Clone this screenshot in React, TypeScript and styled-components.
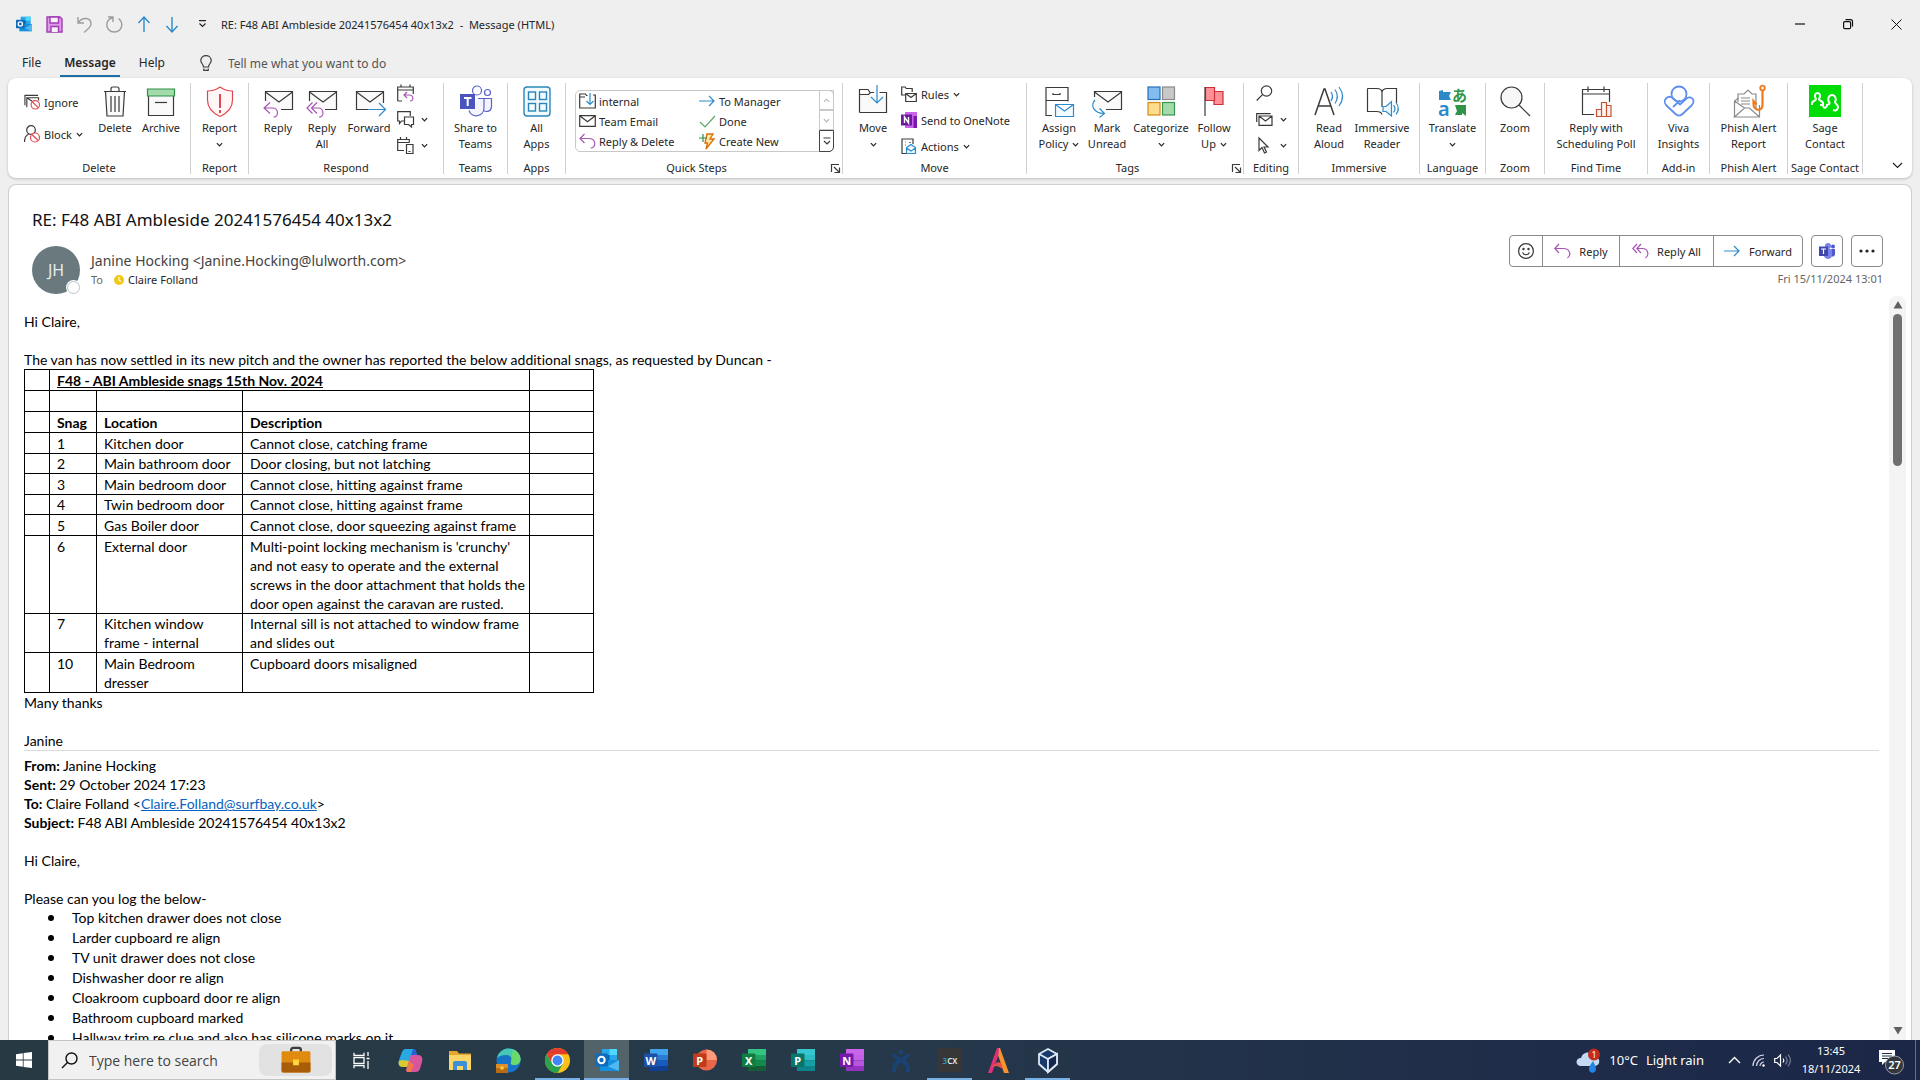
import React from "react";
import styled, { createGlobalStyle, css } from "styled-components";

const ui = '"Noto Sans", "Open Sans", sans-serif';
const bodyFont = 'Lato, "Open Sans", sans-serif';
const ink = "#262626";
const purple = "#a855b5";
const blue = "#2e8bcb";

const GlobalStyle = createGlobalStyle`
  *, *::before, *::after { box-sizing: border-box; }
  body { margin: 0; background: #efefef; font-family: ${ui}; color: ${ink}; overflow: hidden; }
  button, input { font: inherit; color: inherit; }
  button { background: none; border: 0; padding: 0; margin: 0; cursor: default; }
  svg { display: block; flex: none; overflow: visible; }
`;

/* ---------- icon helpers ---------- */

type IconProps = { w?: number; h?: number; box?: string; color?: string; sw?: number; children: React.ReactNode };
const Icon = ({ w = 32, h = w, box, color = "#3b3a39", sw = 1.2, children }: IconProps) => (
  <svg width={w} height={h} viewBox={box ?? `0 0 ${w} ${h}`} fill="none" stroke={color} strokeWidth={sw} aria-hidden="true">
    {children}
  </svg>
);

const Chevron = ({ w = 7, color = "#262626" }: { w?: number; color?: string }) => (
  <Icon w={w} h={w} box="0 0 8 8" color={color} sw={1.4}><path d="M1 2.5l3 3 3-3" /></Icon>
);

const Envelope = ({ open = "M3.5 16V6.5h27v18H19" }: { open?: string }) => (
  <><path d="M3.5 6.5h27v18h-27z" fill="#fafafa" stroke="none" /><path d={open} /><path d="M3.5 7L17 17 30.5 7" /></>
);

const icons = {
  ignore: <Icon w={16} box="0 0 17 17"><path d="M1 12V1.5h14M3 14V4h12.500v3M3 4l6 4" /><circle cx="12" cy="11.5" r="4.5" fill="#fff" stroke="#e0484f" /><path d="M9 8.5l6 6" stroke="#e0484f" /></Icon>,
  block: <Icon w={16} h={18}><circle cx="7" cy="5" r="4.3" /><path d="M5 9c-3 1-4.500 4-4.500 8" /><circle cx="11" cy="12.5" r="4.5" fill="#fff" stroke="#e0484f" /><path d="M8 9.5l6 6" stroke="#e0484f" /></Icon>,
  trash: <Icon><path d="M6.5 6.5l1.500 24.500h16L25.500 6.500" fill="#fafafa" /><path d="M5 6.5h22M12 6V4q0-2 2-2h4q2 0 2 2v2M12 11v16M16 11v16M20 11v16" /></Icon>,
  archive: <Icon><path d="M3.5 11v19.500h25V11" fill="#fafafa" /><path d="M2.5 4h27v7h-27z" fill="#a3dbab" stroke="#2f8f46" /><path d="M10 17.5h12" /></Icon>,
  report: <Icon color="#e0484f"><path d="M16 2c4 3 8 4 12.500 4v9c0 8-5 13-12.500 16.500C8.500 28 3.500 23 3.500 15V6C8 6 12 5 16 2z" fill="#fff7f7" /><path d="M16 9v14M16 25v3" strokeWidth="2" /></Icon>,
  reply: <Icon><Envelope /><path d="M8 17.500l-6 5.500 6 5.500M2 23h8c4 0 5.500 2.500 5.500 5 0 2.500-2 4-4 4" stroke={purple} /></Icon>,
  replyAll: <Icon><Envelope /><path d="M6.500 17.500L1 23l5.500 5.500M11 17.500L5.500 23l5.500 5.500M5.500 23h6c4 0 5.500 2.500 5.500 5 0 2.500-2 4-4 4" stroke={purple} /></Icon>,
  forward: <Icon><Envelope open="M15 24.5H3.500v-18h27V18" /><path d="M15 24.5h17M26 18l6.500 6.500L26 31" stroke={blue} /></Icon>,
  meeting: <Icon w={17} h={18}><path d="M.7 17V3h15.600v7M.7 6h15.600M4 3V.5M13 3V.5M.7 17H5" /><path d="M10 8l-3 3 3 3M7 11h5c5 0 5 6 1 6" stroke={purple} /></Icon>,
  im: <Icon w={17} h={17}><path d="M7 10H4.500L2.500 12.500V10H.7V.7h12.600V5" /><path d="M7.500 6h9v7.500h-2V16l-3-2.500h-4z" /></Icon>,
  moreRespond: <Icon w={17} h={17}><path d="M7 13.500H.7V2.500h11.600v3M.7 5.500h11.600M3.500 2.500V0M9.500 2.500V0" /><path d="M9.500 7.500h6.500v9H9.500zM11.500 14.500h2" /></Icon>,
  teams: <Icon color="#5b62c9"><circle cx="17" cy="5.5" r="4.5" /><circle cx="27.5" cy="7.5" r="3" /><path d="M22 13.500h9.500v8c0 5-5 6-8 4M18 13.500h6v9c0 10-13 11-15 3" fill="#f4f4ff" /><path d="M0 9h15v15H0z" fill="#4b53bc" stroke="none" /><path d="M4 13h7.500M7.700 13v8" stroke="#fff" strokeWidth="2" /></Icon>,
  apps: <Icon color="#2a86b8" sw={1.4}><rect x="3" y="2" width="26" height="29" rx="3" fill="#f1fafe" /><rect x="7.5" y="7" width="7" height="7.5" /><rect x="18.5" y="7" width="7" height="7.5" /><rect x="7.5" y="18.5" width="7" height="7.5" /><rect x="18.5" y="18.5" width="7" height="7.5" /></Icon>,
  qsMove: <Icon w={17} h={16}><path d="M6 4H.7v11h15.600V2H14M.7 4V1h5.800l1 1.500h1" /><path d="M11 0v11M7.500 8l3.500 3.500L14.500 8" stroke={blue} /></Icon>,
  qsMail: <Icon w={17} h={12}><path d="M.7.7h15.600v10.600H.7zM.7.7l7.800 6 7.800-6" /></Icon>,
  qsReply: <Icon w={17} h={15} color={purple}><path d="M5.500 0L1 4.500 5.500 9M1 4.500h8.500c8 0 8 9.500 2 9.500" /></Icon>,
  qsForward: <Icon w={16} h={12} color={blue}><path d="M0 6h15M10 1l5 5-5 5" /></Icon>,
  qsDone: <Icon w={17} h={13} color="#5aa768"><path d="M1 7l5 5L16 1" /></Icon>,
  qsNew: <Icon w={16} h={17} color="#d9730d"><path d="M8 1h6l-3 5h4L7 16l1.500-6H6z" fill="#ffe9a8" strokeWidth="1.4" /><path d="M4 1v8M0 5h8" stroke="#2f8f46" /></Icon>,
  move: <Icon><path d="M2.500 27.500V10h27v17.500z" fill="#fafafa" stroke="none" /><path d="M2.500 27.500V4.500h8.500l2 3h4M22.500 7.500h7v20h-27M2.500 9.500h9l2-2" /><path d="M20 0v18M14 12l6 6 6-6" stroke={blue} /></Icon>,
  rules: <Icon w={16} h={17}><path d="M4 9H.7V1h3.500l1 1.500h6V6" /><path d="M4.700 7.500h10.600v8H4.700zM4.700 7.500l5.300 4 5.300-4" /></Icon>,
  onenote: <Icon w={16} h={16}><path d="M4 0h12v16H4z" fill="#ca64ea" stroke="none" /><path d="M12.500 4H16v12h-3.500z" fill="#7719aa" stroke="none" /><path d="M0 2.500h11v11H0z" fill="#6b1c9c" stroke="none" /><path d="M3.500 11V5l4 6V5" stroke="#fff" strokeWidth="1.4" /></Icon>,
  actions: <Icon w={16} h={17}><path d="M5 15.500H1V1h11v5" /><path d="M4 4h1M4 7h1M8 4.500h2" stroke="#777" /><path d="M5.500 15.500V9.500L10 6.500l4.500 3v6zM5.500 10l4.500 3 4.500-3" stroke={blue} fill="#eaf5fd" /></Icon>,
  assign: <Icon><path d="M9 30.500H3V2.500h22v14M3 15.500h22M10 8v1.500h7V8" /><path d="M12.500 19.500h18v12h-18zM12.500 19.500l9 6.500 9-6.500" stroke={blue} fill="#f3faff" /></Icon>,
  unread: <Icon><Envelope open="M3.500 12V6.500h27v18H15" /><path d="M4 15c-5 6-1 13 9 13.500M8.500 23.500l5 5-5 4" stroke={blue} /></Icon>,
  categorize: <Icon><rect x="3" y="2" width="12" height="12.5" fill="#83bdf0" stroke="#2271b8" /><rect x="17.5" y="2" width="12" height="12.5" fill="#c8c8c8" stroke="#8a8a8a" /><rect x="3" y="17.5" width="12" height="12.5" fill="#fcdc8d" stroke="#d58a17" /><rect x="17.5" y="17.5" width="12" height="12.5" fill="#a3dbab" stroke="#3a9550" /></Icon>,
  flag: <Icon><path d="M16 6.500h9v13h-9z" fill="#ff9298" stroke="#cc2f37" /><path d="M7.500 2.500h9v13h-9z" fill="#ff9298" stroke="#cc2f37" /><path d="M7 2v29" /></Icon>,
  find: <Icon w={17} h={17}><circle cx="10.5" cy="6" r="5.2" /><path d="M6.500 9.700L.7 15.500" /></Icon>,
  related: <Icon w={17} h={13}><path d="M.7 9V.7h14" /><path d="M3 3h13v9.300H3zM3 3l6.500 5L16 3" /></Icon>,
  select: <Icon w={17} h={17}><path d="M3 1v12.500l3-3 2.500 5.500 2-1-2.500-5H12z" /></Icon>,
  readAloud: <Icon><path d="M2 30L11 4h1l9 26M5.500 21h12" strokeWidth="1.5" /><path d="M18 7c2 3 2 6 0 9M22 4.500c3 4.500 3 9.500 0 14M26 2c4.500 6 4.500 13 0 19" stroke={blue} /></Icon>,
  reader: <Icon><path d="M1.500 3.500h9c3 0 5.500 1 5.500 4 0-3 2.500-4 5.500-4h9V18M1.500 3.500v23h9c3 0 5 .5 5.500 3M16 7.500V22" /><path d="M17 21.500h3l5.500-5v14.500L20 26.500h-3z" fill="#e9f5fd" stroke={blue} /><path d="M27.500 20c2 2.500 2 5 0 7.500M30 17.500c3 4 3 8 0 12" stroke={blue} /></Icon>,
  zoom: <Icon><circle cx="12.5" cy="12.5" r="10.5" fill="#f7f7f7" /><path d="M20 20l11 11" /></Icon>,
  poll: <Icon><path d="M14 29.500H2.500v-25h27V17M2.500 9h27M8 7V1.500M24 7V1.500" /><path d="M16.500 24.500h5V31.500h-5zM21.500 17.500h5V31.500h-5zM26.500 20.500h4.500v11h-4.500z" stroke="#c8502e" fill="#fdf3f0" /></Icon>,
  viva: <Icon color="#5f8fee" sw={1.8}><circle cx="16" cy="9" r="7.5" /><path d="M3 13.500c3-3 6-1.500 8 .5l6 5.500 6.500-6c3-2.500 6.500-.5 7 2 .4 2-.5 3.500-2 5L19.500 29c-2 2-5 2-7 0L3.500 20.500c-2-2-2.500-5-.5-7zM10 22l7-6.500" /></Icon>,
  phish: <Icon color="#8a8a8a"><path d="M5 17V9h6l4-4 4 4h4v14" fill="#fff" /><path d="M1.500 32V16l4-3M26.500 20v12h-25l10-9h5l10 9M1.500 16l10 7M8 13h9M8 16h9M8 19h9" /><path d="M29.500 6v14c0 7-9 6-9-1v-3l3 3.500" stroke="#ee7a1b" strokeWidth="2.2" /><circle cx="29.5" cy="3" r="2.3" stroke="#ee7a1b" strokeWidth="1.8" /></Icon>,
  sage: <Icon><path d="M0 0h32v32H0z" fill="#00dc06" stroke="none" /><path d="M3 20v-2c0-2 4-2 4-4-2-3-1-6 1.500-6s3.500 3 1.500 6c0 2 4 2 4 4v2H11M14 21c1 3 4 2 4-1 3-1 3-2 2-3-2-3 0-7 3-7s5 4 3 7c0 2 3 2 3 5s-2 4-5 3" stroke="#fff" strokeWidth="2" /></Icon>,
};

const TranslateIcon = () => (
  <Icon>
    <path d="M2 6l4-1v2h8l-2 4 2 4H2z" fill="#2b88c9" stroke="none" />
    <path d="M18 20h11v11l-4-3v2h-7l2-4z" fill="#2f9448" stroke="none" />
    <text x="1" y="31" fontSize="20" fontWeight="600" fill="#2b88c9" stroke="none">a</text>
    <text x="15" y="16" fontSize="15" fontWeight="700" fontFamily="Noto Sans CJK JP" fill="#2f9448" stroke="none">あ</text>
  </Icon>
);

/* ---------- window chrome ---------- */

const Screen = styled.div`
  display: flex;
  flex-direction: column;
  height: 100vh;
  min-width: 1200px;
`;

const TitleBar = styled.header`
  flex: none;
  display: flex;
  align-items: center;
  height: 48px;
  padding-left: 16px;
  font-size: 11px;
`;
const QuickAccess = styled.div`
  display: flex;
  align-items: center;
  gap: 14px;
  width: 205px;
`;
const Title = styled.h1`
  flex: 1;
  margin: 0;
  font-size: 11px;
  font-weight: 400;
  white-space: pre;
`;
const WindowButton = styled.button`
  display: grid;
  place-items: center;
  width: 48px;
  height: 48px;
`;

const TabBar = styled.nav`
  flex: none;
  display: flex;
  align-items: center;
  height: 30px;
  padding-left: 18px;
  font-size: 12px;
`;
const Tab = styled.button<{ $active?: boolean }>`
  height: 27px;
  padding: 0 4px;
  margin-right: 15px;
  border-bottom: 2px solid transparent;
  ${(p) => p.$active && css`border-color: #1f6fa8; font-weight: 600;`}
`;
const TellMe = styled.label`
  display: flex;
  align-items: center;
  gap: 16px;
  margin-left: 16px;
`;
const TellMeInput = styled.input`
  width: 260px;
  padding: 0;
  border: 0;
  outline: 0;
  background: transparent;
  &::placeholder { color: #555; opacity: 1; }
`;

/* ---------- ribbon ---------- */

const Ribbon = styled.section`
  flex: none;
  display: flex;
  margin: 0 8px;
  padding: 5px 0 4px;
  height: 100px;
  background: #fff;
  border-radius: 8px;
  box-shadow: 0 1px 3px rgba(0, 0, 0, 0.22);
  font-size: 11px;
`;
const GroupBox = styled.div<{ $w: number }>`
  flex: none;
  display: flex;
  flex-direction: column;
  width: ${(p) => p.$w}px;
  border-right: 1px solid #d0d0d0;
`;
const GroupBody = styled.div<{ $pad: number; $center?: boolean }>`
  display: flex;
  flex: 1;
  padding-left: ${(p) => p.$pad}px;
  justify-content: ${(p) => (p.$center ? "center" : "flex-start")};
`;
const GroupFooter = styled.div`
  display: flex;
  align-items: center;
  height: 12px;
  line-height: 12px;
`;
const GroupLabel = styled.span`
  flex: 1;
  text-align: center;
  white-space: nowrap;
`;
const Launcher = styled.button`
  margin-right: 2px;
  padding-left: 4px;
`;

type GroupProps = { label: string; w: number; pad?: number; launcher?: boolean; children: React.ReactNode };
const Group = ({ label, w, pad, launcher, children }: GroupProps) => (
  <GroupBox $w={w} role="group" aria-label={label}>
    <GroupBody $pad={pad ?? 0} $center={pad === undefined}>{children}</GroupBody>
    <GroupFooter>
      <GroupLabel>{label}</GroupLabel>
      {launcher && (
        <Launcher aria-label={`${label} options`}>
          <Icon w={9} h={9}><path d="M.5 8V.5H8M3 3l5 5M8.500 3.500v5h-5" /></Icon>
        </Launcher>
      )}
    </GroupFooter>
  </GroupBox>
);

const BigButtonBox = styled.button<{ $w: number }>`
  flex: none;
  display: flex;
  flex-direction: column;
  align-items: center;
  width: ${(p) => p.$w}px;
  padding-top: 2px;
  line-height: 16px;
  white-space: nowrap;
  & > svg { margin-bottom: 3px; }
`;
const LabelLine = styled.span`
  display: flex;
  align-items: center;
  justify-content: center;
  gap: 4px;
  min-height: 16px;
`;

type BigProps = { icon: React.ReactNode; lines: string[]; w: number; menu?: boolean };
const BigButton = ({ icon, lines, w, menu }: BigProps) => (
  <BigButtonBox $w={w}>
    {icon}
    <LabelLine>{lines[0]}</LabelLine>
    {(lines[1] || menu) && <LabelLine>{lines[1]}{menu && <Chevron />}</LabelLine>}
  </BigButtonBox>
);

const SmallColumn = styled.div<{ $w: number; $gap: number; $top: number; $left?: number }>`
  display: flex;
  flex-direction: column;
  gap: ${(p) => p.$gap}px;
  width: ${(p) => p.$w}px;
  padding-top: ${(p) => p.$top}px;
  padding-left: ${(p) => p.$left ?? 0}px;
`;
const SmallButton = styled.button`
  display: flex;
  align-items: center;
  gap: 4px;
  height: 18px;
  white-space: nowrap;
`;
const IconMenuButton = styled(SmallButton)`
  gap: 7px;
`;

const Gallery = styled.div`
  display: flex;
  width: 259px;
  height: 62px;
  margin-top: 7px;
  border: 1px solid #c8c8c8;
  border-radius: 5px;
`;
const GalleryGrid = styled.div`
  flex: 1;
  display: grid;
  grid-template-columns: 120px 1fr;
  grid-auto-rows: 20px;
  padding-left: 3px;
`;
const GalleryItem = styled.button`
  display: grid;
  grid-template-columns: 16px 1fr;
  column-gap: 4px;
  align-items: center;
  justify-items: start;
  text-align: left;
  white-space: nowrap;
`;
const GalleryScroll = styled.div`
  display: grid;
  grid-template-rows: 20px 20px 22px;
  width: 15px;
  margin: -1px -1px -1px 0;
`;
const GalleryScrollButton = styled.button<{ $strong?: boolean }>`
  display: grid;
  place-items: center;
  border: 1px solid ${(p) => (p.$strong ? "#444" : "#c8c8c8")};
  border-radius: ${(p) => (p.$strong ? "0 0 5px 0" : "0")};
`;
const RibbonEnd = styled.div`
  flex: 1;
  display: flex;
  align-items: flex-end;
  justify-content: flex-end;
  padding: 0 9px 3px 0;
`;

/* ---------- message ---------- */

const MessagePanel = styled.main`
  flex: 1;
  min-height: 0;
  display: flex;
  flex-direction: column;
  margin: 6px 8px 0;
  padding: 0 5px 0 15px;
  background: #fff;
  border: 1px solid #cfcfcf;
  border-bottom: 0;
  border-radius: 8px 8px 0 0;
`;
const Subject = styled.h2`
  margin: 0;
  padding: 23px 8px 0;
  font-size: 17px;
  line-height: 24px;
  font-weight: 400;
  color: #111;
`;
const MessageHeader = styled.div`
  flex: none;
  display: flex;
  justify-content: space-between;
  padding: 3px 23px 0 8px;
  height: 64px;
`;
const Sender = styled.div`
  display: flex;
  gap: 11px;
  padding-top: 11px;
`;
const Avatar = styled.div`
  position: relative;
  display: grid;
  place-items: center;
  width: 48px;
  height: 48px;
  border-radius: 50%;
  background: #69797e;
  color: #e8ecee;
  font-size: 16px;
`;
const Presence = styled.span`
  position: absolute;
  right: 0;
  bottom: 0;
  width: 13px;
  height: 13px;
  border: 1px solid #b8c4c8;
  border-radius: 50%;
  background: #fff;
  box-shadow: 0 0 0 1px #fff;
`;
const SenderText = styled.div`
  padding-top: 4px;
`;
const FromLine = styled.div`
  font-size: 14px;
  line-height: 21px;
  color: #444;
`;
const ToLine = styled.div`
  display: flex;
  align-items: center;
  font-size: 11px;
  line-height: 18px;
  & > span { width: 23px; color: #666; }
  & > svg { margin-right: 4px; }
`;
const Side = styled.div`
  display: flex;
  flex-direction: column;
  align-items: flex-end;
`;
const Actions = styled.div`
  display: flex;
  gap: 8px;
  font-size: 11px;
`;
const Segments = styled.div`
  display: flex;
  height: 32px;
  border: 1px solid #8a8a8a;
  border-radius: 4px;
`;
const Segment = styled.button<{ $w: number }>`
  display: flex;
  align-items: center;
  justify-content: center;
  gap: 9px;
  width: ${(p) => p.$w}px;
  & + & { border-left: 1px solid #8a8a8a; }
`;
const SquareButton = styled.button`
  display: grid;
  place-items: center;
  width: 32px;
  height: 32px;
  border: 1px solid #8a8a8a;
  border-radius: 4px;
`;
const Sent = styled.time`
  font-size: 11px;
  line-height: 24px;
  color: #666;
`;

const Reading = styled.div`
  flex: 1;
  min-height: 0;
  display: flex;
`;
const Letter = styled.article`
  flex: 1;
  overflow: hidden;
  padding-top: 16px;
  font-family: ${bodyFont};
  font-size: 14px;
  font-variant-ligatures: none;
  line-height: 19px;
  color: #000;
  & p { margin: 0; min-height: 19px; }
`;
const Snags = styled.table`
  border-collapse: collapse;
  table-layout: fixed;
  width: 570px;
  & td, & th {
    border: 1px solid #000;
    padding: 1px 2px 0 7px;
    text-align: left;
    vertical-align: top;
    font-weight: 400;
  }
  & th { font-weight: 700; }
`;
const SnagRow = styled.tr<{ $tight?: boolean }>`
  height: ${(p) => (p.$tight ? 20 : 21)}px;
  ${(p) => p.$tight && css`&& td { padding-top: 0; }`}
`;
const Quoted = styled.section`
  margin-right: 10px;
  padding-top: 5px;
  border-top: 1px solid #dcdcdc;
`;
const Defects = styled.ul`
  margin: 0;
  padding-left: 48px;
  line-height: 20px;
  list-style: none;
  & li { position: relative; }
  & li::before {
    content: "";
    position: absolute;
    left: -24px;
    top: 7px;
    width: 6px;
    height: 6px;
    border-radius: 50%;
    background: #000;
  }
`;
const Link = styled.a`
  color: #0563c1;
`;
const ScrollTrack = styled.div`
  display: flex;
  flex-direction: column;
  align-items: center;
  width: 17px;
  padding: 5px 0;
  background: #f4f4f4;
  border-radius: 8px 8px 0 0;
`;
const ScrollThumb = styled.div`
  width: 9px;
  height: 152px;
  margin: 5px 0 auto;
  border-radius: 5px;
  background: #707070;
`;

/* ---------- taskbar ---------- */

const Taskbar = styled.footer`
  flex: none;
  display: flex;
  height: 40px;
  background: linear-gradient(90deg, #273a43 0%, #26394a 45%, #1f2c49 80%, #1c2748 100%);
  color: #fff;
`;
const StartButton = styled.button`
  display: grid;
  place-items: center;
  width: 48px;
`;
const SearchBox = styled.label`
  display: flex;
  align-items: center;
  gap: 11px;
  width: 288px;
  padding: 0 3px 0 12px;
  background: #f1f1f1;
  border: 1px solid #c4c4c4;
  color: #333;
  font-family: "Open Sans", "Noto Sans", sans-serif;
  font-size: 14px;
`;
const SearchInput = styled.input`
  flex: 1;
  min-width: 0;
  padding: 0;
  border: 0;
  outline: 0;
  background: transparent;
  &::placeholder { color: #444; opacity: 1; }
`;
const SearchArt = styled.span`
  display: grid;
  place-items: center;
  width: 73px;
  height: 32px;
  border-radius: 8px;
  background: #e2e2e2;
`;
const Apps = styled.div`
  display: flex;
  flex: 1;
  padding-left: 1px;
`;
const AppButton = styled.button<{ $running?: boolean; $active?: boolean }>`
  display: grid;
  place-items: center;
  width: 45px;
  margin: 0 2px;
  border-top: 2px solid ${(p) => (p.$active ? "#52636a" : "transparent")};
  border-bottom: 2px solid ${(p) => (p.$running ? "#76b0e4" : "transparent")};
  background: ${(p) => (p.$active ? "#52636a" : "transparent")};
`;
const Tray = styled.div`
  display: flex;
  align-items: center;
  font-size: 11px;
`;
const Weather = styled.button`
  display: flex;
  align-items: center;
  gap: 8px;
  margin-right: 18px;
  font-size: 13px;
`;
const TrayButton = styled.button`
  display: grid;
  place-items: center;
  width: 24px;
  height: 40px;
`;
const Clock = styled.div`
  width: 68px;
  margin-left: 3px;
  line-height: 18px;
  text-align: center;
`;
const Notices = styled.button`
  display: grid;
  place-items: center;
  width: 48px;
  height: 40px;
  margin-left: 2px;
`;
const DesktopEdge = styled.span`
  width: 5px;
  height: 40px;
  border-left: 1px solid #66708a;
`;

type OfficeProps = { letter: string; dark: string; tones: string[]; round?: boolean };
const OfficeIcon = ({ letter, dark, tones, round }: OfficeProps) => (
  <Icon w={24}>
    {round ? (
      <><circle cx="13.5" cy="12" r="10.5" fill={tones[0]} stroke="none" /><path d="M13.500 1.500A10.500 10.500 0 0124 12H13.500z" fill={tones[1]} stroke="none" /></>
    ) : (
      <>
        <path d="M6 1h18v6H6z" fill={tones[0]} stroke="none" />
        <path d="M6 7h18v5.500H6z" fill={tones[1]} stroke="none" />
        <path d="M6 12.500h18V18H6z" fill={tones[2]} stroke="none" />
        <path d="M6 18h18v5H6z" fill={tones[3]} stroke="none" />
      </>
    )}
    <rect x="0" y="5.5" width="13.5" height="13.5" rx="1" fill={dark} stroke="none" />
    <text x="6.7" y="16.5" fontSize="11" fontWeight="700" textAnchor="middle" fill="#fff" stroke="none">{letter}</text>
  </Icon>
);

const OutlookIcon = ({ w }: { w: number }) => (
  <Icon w={w} box="0 0 24 24">
    <path d="M7 1h15v12H7z" fill="#28a8ea" stroke="none" />
    <path d="M14.500 1H22v6h-7.500z" fill="#50d9ff" stroke="none" />
    <path d="M7 7h7.500v6H7z" fill="#0364b8" stroke="none" />
    <path d="M5 12h19v11H5z" fill="#1490df" stroke="none" />
    <path d="M24 12L13 18.500 24 23z" fill="#50b8f0" stroke="none" />
    <rect x="0" y="5.5" width="13" height="13" rx="1" fill="#0f6cbd" stroke="none" />
    <circle cx="6.5" cy="12" r="3.2" stroke="#fff" strokeWidth="2" />
  </Icon>
);

const Briefcase = ({ w, h }: { w: number; h: number }) => (
  <Icon w={w} h={h} box="0 0 30 27">
    <path d="M10 5V3q0-2 2-2h6q2 0 2 2v2" stroke="#3c3c3c" strokeWidth="2.4" />
    <rect y="4.5" width="30" height="22" rx="1.5" fill="#e08a10" stroke="none" />
    <path d="M0 16h30v9q0 1.500-1.500 1.500h-27Q0 26.500 0 25z" fill="#a85d08" stroke="none" />
    <rect x="12" y="13" width="6" height="6" fill="#ffd83b" stroke="none" />
  </Icon>
);

const apps: { name: string; icon: React.ReactNode; running?: boolean; active?: boolean }[] = [
  { name: "Task View", icon: <Icon w={17} h={17} color="#fff" sw={1.3}><path d="M1 .7v2.600h10V.7M1 5.500h10v6H1zM1 16.300v-2.600h10v2.600M15 0v4M15 9v8M13.500 6.500h3" /></Icon> },
  { name: "Copilot", icon: (
    <Icon w={25}>
      <path d="M7 1h8c3 0 3 3 4 6h-5L10 19H5c-4 0-5-3-4-7L4 4c1-2 2-3 3-3z" fill="#27a8e0" stroke="none" />
      <path d="M1 13l3-1 8 1-2 6H5c-4 0-5-3-4-6z" fill="#d9c832" stroke="none" />
      <path d="M18 24h-8c-3 0-2-3-1-5l4-12h7c4 0 5 3 4 7l-2 7c-1 2-2 3-4 3z" fill="#d6559c" stroke="none" />
      <path d="M15 1c3 0 3 3 4 6h-6z" fill="#2760d8" stroke="none" />
      <path d="M9 20l2-7 5 4-3 7h-3q-2 0-1-4z" fill="#f2784b" stroke="none" />
    </Icon>
  ) },
  { name: "File Explorer", icon: <Icon w={22} h={19}><path d="M0 0h8l2 2.500h12V19H0z" fill="#e8a52c" stroke="none" /><path d="M0 4h22v15H0z" fill="#fbd566" stroke="none" /><path d="M4 19v-7q0-2 2-2h10q2 0 2 2v7h-4v-4H8v4z" fill="#3d8fd6" stroke="none" /></Icon> },
  { name: "Edge", icon: (
    <Icon w={25}>
      <circle cx="12.5" cy="12.5" r="12" fill="#1673c6" stroke="none" />
      <path d="M1 10C3 3 8 .5 12.500.5c7 0 12 5 12 10.500 0 4-3 6-6.500 6-3 0-4-1.500-3-3 2-4-1-7-5-7-4 0-7 1-9 3z" fill="#46c9b4" stroke="none" />
      <path d="M17 1.500c5 2 7.500 6 7.500 9.500 0 4-3 6-6.500 6-3 0-4-1.500-3-3z" fill="#6bd96a" stroke="none" />
      <path d="M0 16h12v9H0z" fill="#b86a14" stroke="none" /><path d="M0 16h12v4H0z" fill="#dd8d2a" stroke="none" /><path d="M4.500 18.500h3v3h-3z" fill="#ffd83b" stroke="none" />
    </Icon>
  ) },
  { name: "Chrome", running: true, icon: (
    <Icon w={25} box="0 0 24 24">
      <circle cx="12" cy="12" r="12" fill="#fbc116" stroke="none" />
      <path d="M1.600 6A12 12 0 0122.400 6H12z" fill="#e33b2e" stroke="none" />
      <path d="M12 6L1.600 6l5.200 9z" fill="#e33b2e" stroke="none" />
      <path d="M1.600 6A12 12 0 0012 24l5.200-9H6.800z" fill="#2ba24c" stroke="none" />
      <circle cx="12" cy="12" r="6" fill="#fff" stroke="none" /><circle cx="12" cy="12" r="4.7" fill="#4086f4" stroke="none" />
    </Icon>
  ) },
  { name: "Outlook", running: true, active: true, icon: <OutlookIcon w={24} /> },
  { name: "Word", icon: <OfficeIcon letter="W" dark="#1b51a8" tones={["#41a5ee", "#2b7cd3", "#185abd", "#103f91"]} /> },
  { name: "PowerPoint", icon: <OfficeIcon letter="P" dark="#c13b1b" tones={["#e8674a", "#ff9a7b"]} round /> },
  { name: "Excel", icon: <OfficeIcon letter="X" dark="#107c41" tones={["#33c481", "#21a366", "#138a4b", "#185c37"]} /> },
  { name: "Publisher", icon: <OfficeIcon letter="P" dark="#077568" tones={["#37c6d0", "#2dbcc2", "#16a0a6", "#0e8389"]} /> },
  { name: "OneNote", icon: <OfficeIcon letter="N" dark="#7719aa" tones={["#ca64ea", "#c45fe8", "#b655dd", "#9332bf"]} /> },
  { name: "Jira", icon: <Icon w={20} h={25} color="#1a4272" sw={4}><path d="M3 6c0 6 14 6 14 15v3M17 6c0 6-14 6-14 15v3" /><circle cx="10" cy="4" r="2" fill="#1a4272" strokeWidth="1" /></Icon> },
  { name: "3CX", running: true, icon: (
    <Icon w={24}><path d="M0 0h24v24H0z" fill="#373737" stroke="none" /><text x="12" y="15.5" fontSize="8" fontWeight="600" textAnchor="middle" fill="#e8e8e8" stroke="none"><tspan fill="#2b9ac6">3</tspan>CX</text></Icon>
  ) },
  { name: "Autodesk", icon: <Icon w={21} h={25}><path d="M9 0h3l9 25h-5L10 7z" fill="#f7922c" stroke="none" /><path d="M0 25L9 0h2l-.5 7L4 25z" fill="#e0307a" stroke="none" /><path d="M2 19l8-5 3 1 2 6-6-3z" fill="#e2504c" stroke="none" /></Icon> },
  { name: "VirtualBox", running: true, icon: <Icon w={20} h={25} color="#dfe8f5" sw={1.8}><path d="M10 1l9 5v10l-9 8-9-8V6z" fill="#183a6b" /><path d="M1 6l9 5 9-5M10 11v13" /><path d="M10 11v13l9-8V6z" fill="#12274b" /></Icon> },
];

/* ---------- content ---------- */

const snags: { id: string; place: string; text: string; tight?: boolean }[] = [
  { id: "1", place: "Kitchen door", text: "Cannot close, catching frame" },
  { id: "2", place: "Main bathroom door", text: "Door closing, but not latching", tight: true },
  { id: "3", place: "Main bedroom door", text: "Cannot close, hitting against frame" },
  { id: "4", place: "Twin bedroom door", text: "Cannot close, hitting against frame", tight: true },
  { id: "5", place: "Gas Boiler door", text: "Cannot close, door squeezing against frame" },
  { id: "6", place: "External door", text: "Multi-point locking mechanism is 'crunchy' and not easy to operate and the external screws in the door attachment that holds the door open against the caravan are rusted." },
  { id: "7", place: "Kitchen window frame - internal", text: "Internal sill is not attached to window frame and slides out", tight: true },
  { id: "10", place: "Main Bedroom dresser", text: "Cupboard doors misaligned" },
];

const defects = [
  "Top kitchen drawer does not close",
  "Larder cupboard re align",
  "TV unit drawer does not close",
  "Dishwasher door re align",
  "Cloakroom cupboard door re align",
  "Bathroom cupboard marked",
  "Hallway trim re clue and also has silicone marks on it",
];

const quickSteps: [React.ReactNode, string][] = [
  [icons.qsMove, "internal"],
  [icons.qsForward, "To Manager"],
  [icons.qsMail, "Team Email"],
  [icons.qsDone, "Done"],
  [icons.qsReply, "Reply & Delete"],
  [icons.qsNew, "Create New"],
];

const TopArea = () => (
  <>
    <TitleBar>
      <QuickAccess>
        <OutlookIcon w={16} />
        <button aria-label="Save"><Icon w={17} h={17} color="#a03cb4" sw={1.4}><path d="M1 1h13l2 2v13H1z" fill="#dd9be8" /><path d="M4 1h8.500v6H4zM5 16v-5.500h7.500V16" fill="#f6f0f8" /></Icon></button>
        <button aria-label="Undo"><Icon w={15} h={17} color="#9d9d9d" sw={1.4}><path d="M1 1v6h6M1.500 6.500C6 0 14 2 14 8c0 3-3 5-7 8.500" /></Icon></button>
        <button aria-label="Redo"><Icon w={17} h={17} color="#9d9d9d" sw={1.4}><path d="M2 1h5v5M7 1.500C3 2.500.8 5.500.8 9c0 4 3.200 7 7.500 7s7.500-3 7.500-7c0-3-1.300-5-3.300-6.500" /></Icon></button>
        <button aria-label="Previous item"><Icon w={14} h={17} color={blue} sw={1.4}><path d="M7 16V1M1.500 7L7 1l5.500 6" /></Icon></button>
        <button aria-label="Next item"><Icon w={14} h={17} color={blue} sw={1.4}><path d="M7 1v15M1.500 10L7 16l5.500-6" /></Icon></button>
        <button aria-label="Customise toolbar"><Icon w={17} h={8} color={ink}><path d="M6 .6h7M6.500 3.500l3 3 3-3" /></Icon></button>
      </QuickAccess>
      <Title>{"RE: F48 ABI Ambleside 20241576454 40x13x2  -  Message (HTML)"}</Title>
      <WindowButton aria-label="Minimise"><Icon w={10} h={10} color="#111"><path d="M0 5h10" /></Icon></WindowButton>
      <WindowButton aria-label="Restore"><Icon w={10} h={10} color="#111"><rect x=".6" y="2.6" width="7" height="7" rx="1.2" /><path d="M2.500.6h5q2 0 2 2v5" /></Icon></WindowButton>
      <WindowButton aria-label="Close"><Icon w={11} h={11} color="#111" sw={1}><path d="M.5.5l10 10M10.500.5l-10 10" /></Icon></WindowButton>
    </TitleBar>
    <TabBar>
      <Tab>File</Tab>
      <Tab $active>Message</Tab>
      <Tab>Help</Tab>
      <TellMe>
        <Icon w={12} h={16}><path d="M3.500 12C3.500 9 .8 8.500.8 5.500c0-6.500 10.400-6.500 10.400 0C11.200 8.500 8.500 9 8.500 12zM3.800 13.500V15.300h4.400v-1.800" /></Icon>
        <TellMeInput placeholder="Tell me what you want to do" aria-label="Tell me what you want to do" />
      </TellMe>
    </TabBar>
  </>
);

const RibbonArea = () => (
  <Ribbon>
    <Group label="Delete" w={183} pad={16}>
      <SmallColumn $w={68} $gap={14} $top={10}>
        <SmallButton>{icons.ignore}Ignore</SmallButton>
        <SmallButton>{icons.block}Block<Chevron /></SmallButton>
      </SmallColumn>
      <BigButton icon={icons.trash} lines={["Delete"]} w={46} />
      <BigButton icon={icons.archive} lines={["Archive"]} w={46} />
    </Group>
    <Group label="Report" w={58}><BigButton icon={icons.report} lines={["Report"]} w={50} menu /></Group>
    <Group label="Respond" w={195} pad={7}>
      <BigButton icon={icons.reply} lines={["Reply"]} w={44} />
      <BigButton icon={icons.replyAll} lines={["Reply", "All"]} w={44} />
      <BigButton icon={icons.forward} lines={["Forward"]} w={50} />
      <SmallColumn $w={44} $gap={8} $top={1} $left={3}>
        <IconMenuButton aria-label="Meeting">{icons.meeting}</IconMenuButton>
        <IconMenuButton aria-label="IM">{icons.im}<Chevron /></IconMenuButton>
        <IconMenuButton aria-label="More">{icons.moreRespond}<Chevron /></IconMenuButton>
      </SmallColumn>
    </Group>
    <Group label="Teams" w={64}><BigButton icon={icons.teams} lines={["Share to", "Teams"]} w={60} /></Group>
    <Group label="Apps" w={58}><BigButton icon={icons.apps} lines={["All", "Apps"]} w={50} /></Group>
    <Group label="Quick Steps" w={277} pad={9} launcher>
      <Gallery>
        <GalleryGrid>
          {quickSteps.map(([icon, name]) => <GalleryItem key={name}>{icon}<span>{name}</span></GalleryItem>)}
        </GalleryGrid>
        <GalleryScroll>
          <GalleryScrollButton aria-label="Previous steps"><Icon w={7} box="0 0 8 8" color="#b5b5b5"><path d="M1 5.500l3-3 3 3" /></Icon></GalleryScrollButton>
          <GalleryScrollButton aria-label="Next steps"><Chevron color="#b5b5b5" /></GalleryScrollButton>
          <GalleryScrollButton $strong aria-label="All steps"><Icon w={8} h={8}><path d="M.5 1h7M1 4l3 3 3-3" /></Icon></GalleryScrollButton>
        </GalleryScroll>
      </Gallery>
    </Group>
    <Group label="Move" w={184} pad={9}>
      <BigButton icon={icons.move} lines={["Move"]} w={42} menu />
      <SmallColumn $w={130} $gap={8} $top={2} $left={7}>
        <SmallButton>{icons.rules}Rules<Chevron /></SmallButton>
        <SmallButton>{icons.onenote}Send to OneNote</SmallButton>
        <SmallButton>{icons.actions}Actions<Chevron /></SmallButton>
      </SmallColumn>
    </Group>
    <Group label="Tags" w={217} pad={8} launcher>
      <BigButton icon={icons.assign} lines={["Assign", "Policy"]} w={48} menu />
      <BigButton icon={icons.unread} lines={["Mark", "Unread"]} w={48} />
      <BigButton icon={icons.categorize} lines={["Categorize"]} w={60} menu />
      <BigButton icon={icons.flag} lines={["Follow", "Up"]} w={46} menu />
    </Group>
    <Group label="Editing" w={55} pad={12}>
      <SmallColumn $w={42} $gap={8} $top={1}>
        <IconMenuButton aria-label="Find">{icons.find}</IconMenuButton>
        <IconMenuButton aria-label="Related">{icons.related}<Chevron /></IconMenuButton>
        <IconMenuButton aria-label="Select">{icons.select}<Chevron /></IconMenuButton>
      </SmallColumn>
    </Group>
    <Group label="Immersive" w={121} pad={8}>
      <BigButton icon={icons.readAloud} lines={["Read", "Aloud"]} w={44} />
      <BigButton icon={icons.reader} lines={["Immersive", "Reader"]} w={62} />
    </Group>
    <Group label="Language" w={66}><BigButton icon={<TranslateIcon />} lines={["Translate"]} w={60} menu /></Group>
    <Group label="Zoom" w={59}><BigButton icon={icons.zoom} lines={["Zoom"]} w={50} /></Group>
    <Group label="Find Time" w={103}><BigButton icon={icons.poll} lines={["Reply with", "Scheduling Poll"]} w={96} /></Group>
    <Group label="Add-in" w={62}><BigButton icon={icons.viva} lines={["Viva", "Insights"]} w={56} /></Group>
    <Group label="Phish Alert" w={78}><BigButton icon={icons.phish} lines={["Phish Alert", "Report"]} w={70} /></Group>
    <Group label="Sage Contact" w={75}><BigButton icon={icons.sage} lines={["Sage", "Contact"]} w={60} /></Group>
    <RibbonEnd><button aria-label="Collapse ribbon"><Icon w={11} h={11} color="#222"><path d="M1 3l4.500 4.500L10 3" /></Icon></button></RibbonEnd>
  </Ribbon>
);

const MessageArea = () => (
  <MessagePanel>
    <Subject>RE: F48 ABI Ambleside 20241576454 40x13x2</Subject>
    <MessageHeader>
      <Sender>
        <Avatar>JH<Presence /></Avatar>
        <SenderText>
          <FromLine>Janine Hocking &lt;Janine.Hocking@lulworth.com&gt;</FromLine>
          <ToLine>
            <span>To</span>
            <Icon w={10} h={10} color="#fff"><circle cx="5" cy="5" r="5" fill="#f2c811" stroke="none" /><path d="M5 2v3.200l2 1.300" /></Icon>
            Claire Folland
          </ToLine>
        </SenderText>
      </Sender>
      <Side>
        <Actions>
          <Segments>
            <Segment $w={32} aria-label="React"><Icon w={16} h={16}><circle cx="8" cy="8" r="7.4" /><path d="M4.500 9.500c1.500 3 5.500 3 7 0" /><circle cx="5.5" cy="6" r=".6" fill="#333" /><circle cx="10.5" cy="6" r=".6" fill="#333" /></Icon></Segment>
            <Segment $w={77}><Icon w={16} h={15} color={purple}><path d="M5 0L.8 4.500 5 9M.8 4.500H9c8 0 8 7 4.500 9.500" /></Icon>Reply</Segment>
            <Segment $w={94}><Icon w={16} h={15} color={purple}><path d="M5 0L.8 4.500 5 9M9 0L4.800 4.500 9 9M5 4.500h5c7 0 7 7 3.500 9.500" /></Icon>Reply All</Segment>
            <Segment $w={89}><Icon w={16} h={12} color={blue}><path d="M0 6h15M10 1l5 5-5 5" /></Icon>Forward</Segment>
          </Segments>
          <SquareButton aria-label="Share to Teams">
            <Icon w={16} h={16}><circle cx="9" cy="3" r="3" fill="#7b83eb" stroke="none" /><circle cx="14" cy="3.5" r="2" fill="#5059c9" stroke="none" /><path d="M11 6h5v5c0 3-3 3-4 2z" fill="#5059c9" stroke="none" /><path d="M5 6h8v6c0 5-7 5-8 1z" fill="#7b83eb" stroke="none" /><path d="M0 3.500h9V13H0z" fill="#4048ad" stroke="none" /><path d="M2 6h5M4.500 6v5" stroke="#fff" /></Icon>
          </SquareButton>
          <SquareButton aria-label="More actions"><Icon w={16} h={4}><g fill="#222" stroke="none"><circle cx="2" cy="2" r="1.6" /><circle cx="8" cy="2" r="1.6" /><circle cx="14" cy="2" r="1.6" /></g></Icon></SquareButton>
        </Actions>
        <Sent dateTime="2024-11-15T13:01">Fri 15/11/2024 13:01</Sent>
      </Side>
    </MessageHeader>
    <Reading>
      <Letter>
        <p>Hi Claire,</p>
        <p />
        <p>The van has now settled in its new pitch and the owner has reported the below additional snags, as requested by Duncan -</p>
        <Snags>
          <colgroup><col width="25" /><col width="47" /><col width="146" /><col width="287" /><col width="64" /></colgroup>
          <tbody>
            <SnagRow><td /><th colSpan={3}><u>F48 - ABI Ambleside snags 15th Nov. 2024</u></th><td /></SnagRow>
            <SnagRow><td /><td /><td /><td /><td /></SnagRow>
            <SnagRow><td /><th scope="col">Snag</th><th scope="col">Location</th><th scope="col">Description</th><td /></SnagRow>
            {snags.map((s) => (
              <SnagRow key={s.id} $tight={s.tight}><td /><td>{s.id}</td><td>{s.place}</td><td>{s.text}</td><td /></SnagRow>
            ))}
          </tbody>
        </Snags>
        <p>Many thanks</p>
        <p />
        <p>Janine</p>
        <Quoted>
          <p><b>From:</b> Janine Hocking</p>
          <p><b>Sent:</b> 29 October 2024 17:23</p>
          <p><b>To:</b> Claire Folland &lt;<Link href="mailto:Claire.Folland@surfbay.co.uk">Claire.Folland@surfbay.co.uk</Link>&gt;</p>
          <p><b>Subject:</b> F48 ABI Ambleside 20241576454 40x13x2</p>
          <p />
          <p>Hi Claire,</p>
          <p />
          <p>Please can you log the below-</p>
          <Defects>{defects.map((d) => <li key={d}>{d}</li>)}</Defects>
        </Quoted>
      </Letter>
      <ScrollTrack>
        <Icon w={10} h={8}><path d="M5 0l4.500 7.500h-9z" fill="#606060" stroke="none" /></Icon>
        <ScrollThumb />
        <Icon w={10} h={8}><path d="M5 7.500L.5 0h9z" fill="#606060" stroke="none" /></Icon>
      </ScrollTrack>
    </Reading>
  </MessagePanel>
);

const TaskbarArea = () => (
  <Taskbar>
    <StartButton aria-label="Start"><Icon w={16} h={16}><path d="M0 2.200l6.800-1v6.300H0zM7.600 1.100L16 0v7.500H7.600zM0 8.400h6.800v6.400L0 13.800zM7.600 8.400H16V16l-8.400-1.100z" fill="#fff" stroke="none" /></Icon></StartButton>
    <SearchBox>
      <Icon w={17} h={17} color="#111" sw={1.4}><circle cx="10.5" cy="6.5" r="5.5" /><path d="M6.500 10.500L1 16" /></Icon>
      <SearchInput placeholder="Type here to search" aria-label="Type here to search" />
      <SearchArt><Briefcase w={30} h={26} /></SearchArt>
    </SearchBox>
    <Apps>
      {apps.map((a) => <AppButton key={a.name} aria-label={a.name} $running={a.running} $active={a.active}>{a.icon}</AppButton>)}
    </Apps>
    <Tray>
      <Weather>
        <Icon w={25} h={25}>
          <path d="M5 18c-6 0-6-8 0-8C7 3 16 3 18 8c6 0 8 10 0 10z" fill="#c3d9f4" stroke="none" />
          <path d="M17 13c-3 4-4 6-4 8 0 5 7 5 7 0 0-2-1-4-3-8z" fill="#2585e4" stroke="none" />
          <circle cx="18" cy="6.5" r="6" fill="#c42b1c" stroke="none" />
          <text x="18" y="10" fontSize="9" textAnchor="middle" fill="#fff" stroke="none">1</text>
        </Icon>
        <span>10°C</span><span>Light rain</span>
      </Weather>
      <TrayButton aria-label="Hidden icons"><Icon w={13} h={8} color="#fff" sw={1.4}><path d="M1 7l5.500-5.500L12 7" /></Icon></TrayButton>
      <TrayButton aria-label="Network"><Icon w={13} h={13} color="#cfd5e0"><path d="M1 12C1 6 6 1 12 1M4.500 12c0-4 3.500-7.500 7.500-7.500M8 12c0-2 2-4 4-4" /><circle cx="11.5" cy="11.5" r="1.2" fill="#fff" stroke="none" /></Icon></TrayButton>
      <TrayButton aria-label="Volume"><Icon w={17} h={13} color="#fff"><path d="M.7 4.500H3l3.500-3.500v11L3 8.500H.7zM9 4.500c1 1.300 1 2.700 0 4" /><path d="M11.500 2.500c2 2.500 2 5.500 0 8M14 .7c3 3.500 3 8 0 11.600" stroke="#77809a" /></Icon></TrayButton>
      <Clock><div>13:45</div><div>18/11/2024</div></Clock>
      <Notices aria-label="Notifications">
        <Icon w={28} h={28}>
          <path d="M2 4h16v12H8l-3 3v-3H2z" fill="#fff" stroke="none" /><path d="M5 7.500h10M5 10h10M5 12.500h7" stroke="#1f2c49" />
          <circle cx="17.5" cy="19" r="9" fill="#33363c" stroke="#9a9da5" strokeWidth="1" />
          <text x="17.5" y="23" fontSize="11" fontWeight="600" textAnchor="middle" fill="#fff" stroke="none">27</text>
        </Icon>
      </Notices>
      <DesktopEdge />
    </Tray>
  </Taskbar>
);

export default function App() {
  return (
    <Screen>
      <GlobalStyle />
      <TopArea />
      <RibbonArea />
      <MessageArea />
      <TaskbarArea />
    </Screen>
  );
}
